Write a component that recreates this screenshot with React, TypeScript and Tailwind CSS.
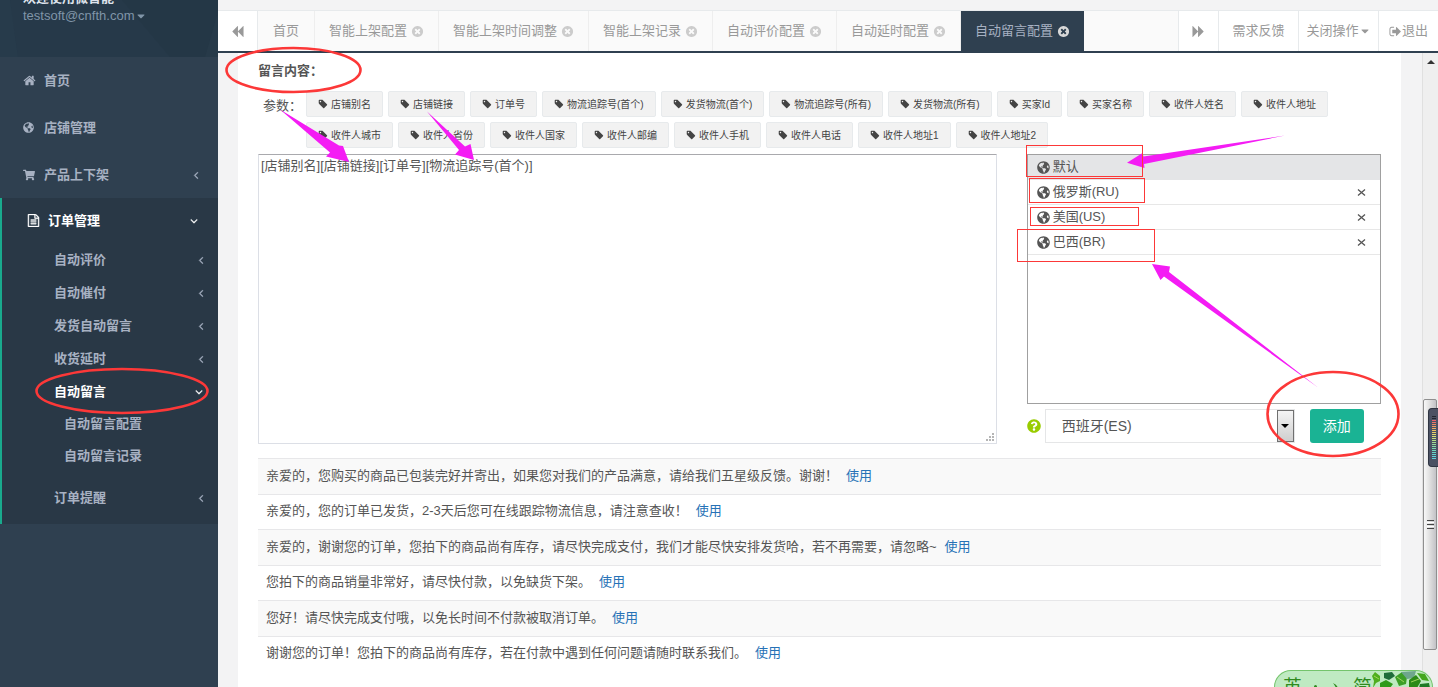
import React from "react";
import { FaGlobeAmericas, FaShoppingCart, FaCaretDown, FaQuestionCircle } from "react-icons/fa";

type GlyphProps = { d: string; className?: string };

function Glyph({ d, className }: GlyphProps) {
  return (
    <svg viewBox="0 0 1792 1792" fill="currentColor" aria-hidden="true" className={`shrink-0 ${className ?? ""}`}>
      <path d={d} />
    </svg>
  );
}

const HOME =
  "M1472 992v480q0 26-19 45t-45 19h-384v-384h-256v384h-384q-26 0-45-19t-19-45v-480q0-1 .5-3t.5-3l575-474 575 474q1 2 1 6zm223-69l-62 74q-8 9-21 11h-3q-13 0-21-7l-692-577-692 577q-12 8-24 7-13-2-21-11l-62-74q-8-10-7-23.5t11-21.5l719-599q32-26 76-26t76 26l244 204v-195q0-14 9-23t23-9h192q14 0 23 9t9 23v408l219 182q10 8 11 21.5t-7 23.5z";
const CLOSE =
  "M1277 1122q0-26-19-45l-181-181 181-181q19-19 19-45 0-27-19-46l-90-90q-19-19-46-19-26 0-45 19l-181 181-181-181q-19-19-45-19-27 0-46 19l-90 90q-19 19-19 46 0 26 19 45l181 181-181 181q-19 19-19 45 0 27 19 46l90 90q19 19 46 19 26 0 45-19l181-181 181 181q19 19 45 19 27 0 46-19l90-90q19-19 19-46zm387-226q0 209-103 385.5t-279.5 279.5-385.5 103-385.5-103-279.5-279.5-103-385.5 103-385.5 279.5-279.5 385.5-103 385.5 103 279.5 279.5 103 385.5z";
const BACKWARD =
  "M1683 141q19-19 32-13t13 32v1472q0 26-13 32t-32-13l-710-710q-9-9-13-19v710q0 26-13 32t-32-13l-710-710q-19-19-19-45t19-45l710-710q19-19 32-13t13 32v710q4-10 13-19z";
const FORWARD =
  "M109 1651q-19 19-32 13t-13-32v-1472q0-26 13-32t32 13l710 710q9 9 13 19v-710q0-26 13-32t32 13l710 710q19 19 19 45t-19 45l-710 710q-19 19-32 13t-13-32v-710q-4 10-13 19z";
const FILE_TEXT =
  "M1596 380q28 28 48 76t20 88v1152q0 40-28 68t-68 28h-1344q-40 0-68-28t-28-68v-1600q0-40 28-68t68-28h896q40 0 88 20t76 48zm-444-244v376h376q-10-29-22-41l-313-313q-12-12-41-22zm384 1528v-1024h-416q-40 0-68-28t-28-68v-416h-768v1536h1280zm-1024-864q0-14 9-23t23-9h704q14 0 23 9t9 23v64q0 14-9 23t-23 9h-704q-14 0-23-9t-9-23v-64zm736 224q14 0 23 9t9 23v64q0 14-9 23t-23 9h-704q-14 0-23-9t-9-23v-64q0-14 9-23t23-9h704zm0 256q14 0 23 9t9 23v64q0 14-9 23t-23 9h-704q-14 0-23-9t-9-23v-64q0-14 9-23t23-9h704z";
const TAG =
  "M576 448q0-53-37.5-90.5t-90.5-37.5-90.5 37.5-37.5 90.5 37.5 90.5 90.5 37.5 90.5-37.5 37.5-90.5zm1067 576q0 53-37 90l-491 492q-39 37-91 37-53 0-90-37l-715-716q-38-37-64.5-101t-26.5-117v-416q0-52 38-90t90-38h416q53 0 117 26.5t102 64.5l715 714q37 39 37 91z";
const SIGN_OUT =
  "M704 1440q0 4 1 20t.5 26.5-3 23.5-10 19.5-20.5 6.5h-320q-119 0-203.5-84.5t-84.5-203.5v-704q0-119 84.5-203.5t203.5-84.5h320q13 0 22.5 9.5t9.5 22.5q0 4 1 20t.5 26.5-3 23.5-10 19.5-20.5 6.5h-320q-66 0-113 47t-47 113v704q0 66 47 113t113 47h312l11.5 1 11.5 3 8 5.5 7 9 2 13.5zm928-544q0 26-19 45l-544 544q-19 19-45 19t-45-19-19-45v-288h-448q-26 0-45-19t-19-45v-384q0-26 19-45t45-19h448v-288q0-26 19-45t45-19 45 19l544 544q19 19 19 45z";
const ANGLE_LEFT =
  "M1203 544q0 13-10 23l-393 393 393 393q10 10 10 23t-10 23l-50 50q-10 10-23 10t-23-10l-466-466q-10-10-10-23t10-23l466-466q10-10 23-10t23 10l50 50q10 10 10 23z";
const ANGLE_DOWN =
  "M1395 736q0 13-10 23l-466 466q-10 10-23 10t-23-10l-466-466q-10-10-10-23t10-23l50-50q10-10 23-10t23 10l393 393 393-393q10-10 23-10t23 10l50 50q10 10 10 23z";

const tabs = ["首页", "智能上架配置", "智能上架时间调整", "智能上架记录", "自动评价配置", "自动延时配置", "自动留言配置"];

const params = [
  "店铺别名", "店铺链接", "订单号", "物流追踪号(首个)", "发货物流(首个)", "物流追踪号(所有)", "发货物流(所有)",
  "买家Id", "买家名称", "收件人姓名", "收件人地址", "收件人城市", "收件人省份", "收件人国家", "收件人邮编",
  "收件人手机", "收件人电话", "收件人地址1", "收件人地址2",
];

const regions = ["默认", "俄罗斯(RU)", "美国(US)", "巴西(BR)"];

const templates = [
  "亲爱的，您购买的商品已包装完好并寄出，如果您对我们的产品满意，请给我们五星级反馈。谢谢！",
  "亲爱的，您的订单已发货，2-3天后您可在线跟踪物流信息，请注意查收！",
  "亲爱的，谢谢您的订单，您拍下的商品尚有库存，请尽快完成支付，我们才能尽快安排发货哈，若不再需要，请忽略~",
  "您拍下的商品销量非常好，请尽快付款，以免缺货下架。",
  "您好！请尽快完成支付哦，以免长时间不付款被取消订单。",
  "谢谢您的订单！您拍下的商品尚有库存，若在付款中遇到任何问题请随时联系我们。",
];

const meterColors = [
  "#20242e", "#20242e", "#f0616c", "#ef7467", "#f08a62", "#f09c60", "#f0ae60", "#efc062", "#ecd066", "#e4da6c",
  "#d8de74", "#c8df7c", "#b6df86", "#a4de90", "#94dd9b", "#86dca6", "#7adbb2", "#70dabd", "#68d8c8", "#62d6d0",
  "#60d4d8", "#60d2dc",
];

function TopItem({ icon, label, arrow }: { icon: React.ReactNode; label: string; arrow?: boolean }) {
  return (
    <a href="#" className="flex h-[47px] items-center pr-4 pl-[23px]">
      <span className="flex w-[21px] items-center">{icon}</span>
      <span className="flex-1">{label}</span>
      {arrow && <Glyph d={ANGLE_LEFT} className="size-3 stroke-current stroke-[60]" />}
    </a>
  );
}

function SubItem({ label, open }: { label: string; open?: boolean }) {
  return (
    <a href="#" className={`flex h-[33px] items-center pl-[52px] ${open ? "pr-[13px] text-white" : "pr-[11px]"}`}>
      <span className="flex-1">{label}</span>
      <Glyph d={open ? ANGLE_DOWN : ANGLE_LEFT} className="size-3 stroke-current stroke-[60]" />
    </a>
  );
}

function Sidebar() {
  return (
    <aside className="flex w-[218px] shrink-0 flex-col bg-[#2f4050] text-[13px] font-bold text-[#a7b1c2]">
      <div className="relative flex h-[57px] flex-col justify-end overflow-hidden bg-[#263949] pb-8 pl-[23px] leading-[18px]">
        <svg className="absolute inset-0 h-full w-full" viewBox="0 0 218 57" preserveAspectRatio="none" aria-hidden="true">
          <path d="M0 0H10L18 57H0Z" fill="#273b4b" />
          <path d="M122 0L170 57H218V0Z" fill="#243746" />
          <path d="M205 57L218 12V57Z" fill="#273a49" />
        </svg>
        <span className="relative text-[#dfe4ed]">欢迎使用微智能</span>
        <a href="#" className="relative flex items-center font-normal text-[#8095a8]">
          testsoft@cnfth.com
          <FaCaretDown className="ml-px size-3" />
        </a>
      </div>
      <nav>
        <TopItem icon={<Glyph d={HOME} className="size-[13px]" />} label="首页" />
        <TopItem icon={<FaGlobeAmericas className="size-[11px]" />} label="店铺管理" />
        <TopItem icon={<FaShoppingCart className="size-3" />} label="产品上下架" arrow />
        <div className="border-l-2 border-[#19aa8d] bg-[#293846] pb-[10px]">
          <a href="#" className="flex h-[45px] items-center pr-[18px] pl-[25px] text-white">
            <Glyph d={FILE_TEXT} className="size-[13px] stroke-current stroke-[50]" />
            <span className="ml-2 flex-1">订单管理</span>
            <Glyph d={ANGLE_DOWN} className="size-3 stroke-current stroke-[60]" />
          </a>
          <SubItem label="自动评价" />
          <SubItem label="自动催付" />
          <SubItem label="发货自动留言" />
          <SubItem label="收货延时" />
          <SubItem label="自动留言" open />
          <div className="mb-[9px]">
            <a href="#" className="flex h-8 items-center pl-[62px]">自动留言配置</a>
            <a href="#" className="flex h-8 items-center pl-[62px]">自动留言记录</a>
          </div>
          <SubItem label="订单提醒" />
        </div>
      </nav>
    </aside>
  );
}

function TabBar() {
  return (
    <header className="bg-[#f3f3f4] pt-[10px]">
      <div className="flex h-[43px] border-t border-b-2 border-t-[#e7eaec] border-b-[#2f4050] bg-[#fafafa] text-[13px] text-[#999]">
        <button aria-label="向左滚动" className="flex w-10 shrink-0 items-center justify-center border-r border-[#e7eaec] bg-white">
          <Glyph d={BACKWARD} className="size-[13px]" />
        </button>
        <nav className="flex min-w-0 flex-1 overflow-hidden">
          {tabs.map((t, i) => {
            const active = i === tabs.length - 1;
            return (
              <a
                key={t}
                href="#"
                className={`flex shrink-0 items-center whitespace-nowrap ${
                  active
                    ? "bg-[#2f4050] px-[14px] text-[#a7b1c2]"
                    : i === 0
                      ? "border-r border-[#eee] px-[15px]"
                      : "border-r border-[#eee] px-[14px]"
                }`}
              >
                {t}
                {i > 0 && <Glyph d={CLOSE} className={`ml-1 size-[13px] ${active ? "text-[#d8d8d8]" : "text-[#ccc]"}`} />}
              </a>
            );
          })}
        </nav>
        <div className="flex shrink-0 bg-white">
          <button aria-label="向右滚动" className="flex w-10 items-center justify-center border-l border-[#e7eaec]">
            <Glyph d={FORWARD} className="size-[13px]" />
          </button>
          <button className="w-20 border-l border-[#e7eaec]">需求反馈</button>
          <button className="flex w-20 items-center justify-center border-l border-[#e7eaec]">
            关闭操作
            <FaCaretDown className="size-3" />
          </button>
          <a href="#" className="flex w-[60px] items-center justify-center border-l border-[#e7eaec]">
            <Glyph d={SIGN_OUT} className="size-[13px]" />
            退出
          </a>
        </div>
      </div>
    </header>
  );
}

function ScrollBar() {
  return (
    <div className="flex w-4 shrink-0 flex-col items-center border-l border-[#e0e0e0] bg-[#efefef]" aria-hidden="true">
      <span className="mt-[7px] border-x-[4px] border-b-[4px] border-x-transparent border-b-[#333]" />
      <div className="mt-[335px] mr-px flex h-[251px] w-[14px] flex-col items-center justify-center gap-px rounded-[2px] border border-[#8f8f8f] bg-linear-to-r from-[#f8f8f8] via-[#dedede] to-[#c2c2c6]">
        <span className="h-px w-[7px] bg-[#444]" />
        <span className="h-px w-[7px] bg-white" />
        <span className="h-px w-[7px] bg-[#444]" />
        <span className="h-px w-[7px] bg-white" />
        <span className="h-px w-[7px] bg-[#444]" />
      </div>
    </div>
  );
}

function Editor() {
  return (
    <section>
      <div className="grid grid-cols-3 gap-x-[30px]">
        <div className="relative col-span-2">
          <textarea
            aria-label="留言内容"
            defaultValue="[店铺别名][店铺链接][订单号][物流追踪号(首个)]"
            className="block h-[290px] w-full resize-none rounded-[1px] border border-[#dcdfe6] border-t-[#a9a9ad] bg-white px-[2px] py-px text-[13px] leading-5 text-[#555] outline-none"
          />
          <svg className="pointer-events-none absolute right-[3px] bottom-[3px] size-2" viewBox="0 0 8 8" fill="#b5b5b5" aria-hidden="true">
            <path d="M6 0h2v2h-2zM3 3h2v2h-2zM6 3h2v2h-2zM0 6h2v2h-2zM3 6h2v2h-2zM6 6h2v2h-2z" />
          </svg>
        </div>
        <div className="flex flex-col gap-[5px]">
          <ul className="h-[250px] border border-[#a0a0a0] text-[13px] text-[#555]">
            {regions.map((r, i) => (
              <li
                key={r}
                className={`flex h-[25px] items-center border-b pr-[14px] pl-[9px] ${
                  i === 0 ? "border-[#e4e5e7] bg-[#e4e5e7]" : "border-[#e7e7e7]"
                }`}
              >
                <FaGlobeAmericas className="mr-[3px] size-[13px] shrink-0" />
                <span className="flex-1">{r}</span>
                {i > 0 && (
                  <button aria-label={`删除${r}`} className="flex size-[9px] items-center justify-center">
                    <svg viewBox="0 0 9 9" className="size-[9px]" fill="none" stroke="currentColor" strokeWidth="1.3">
                      <path d="M1 1.5L8 7.5M8 1.5L1 7.5" />
                    </svg>
                  </button>
                )}
              </li>
            ))}
          </ul>
          <div className="flex items-center">
            <FaQuestionCircle className="size-[14px] shrink-0 text-[#99cc00]" />
            <div className="relative ml-1 flex h-[34px] w-[250px] border border-[#e5e6e7] bg-white">
              <select aria-label="国家" defaultValue="ES" className="w-full appearance-none bg-transparent pl-4 text-sm text-[#555] outline-none">
                <option value="ES">西班牙(ES)</option>
              </select>
              <span className="pointer-events-none absolute top-0 right-0 flex h-8 w-[17px] items-center justify-center border border-[#707070] bg-linear-to-b from-[#f4f4f4] to-[#cfcfcf]">
                <span className="border-x-[4px] border-t-[4px] border-x-transparent border-t-black" />
              </span>
            </div>
            <button className="ml-[15px] h-[34px] w-[54px] rounded-[3px] bg-[#1ab394] text-sm text-white">添加</button>
          </div>
        </div>
      </div>
    </section>
  );
}

function Content() {
  return (
    <main className="min-w-0 flex-1 overflow-hidden bg-[#f3f3f4] pr-[21px] pl-5">
      <div className="min-h-full bg-white px-5 pt-[9px] text-[13px] text-[#555]">
        <h2 className="leading-[18px] font-bold">留言内容：</h2>
        <div className="mt-[11px] flex">
          <span className="w-12 shrink-0 pt-[6px] pl-[5px] leading-[18px] whitespace-nowrap">参数：</span>
          <div className="flex flex-1 flex-wrap gap-[5px]">
            {params.map((p) => (
              <button
                key={p}
                className="flex h-[26px] items-center gap-[3px] rounded-[2px] border border-[#e7eaec] bg-[#f2f2f2] px-[11px] text-[10px] whitespace-nowrap text-[#444]"
              >
                <Glyph d={TAG} className="size-[10px]" />
                {p}
              </button>
            ))}
          </div>
        </div>
        <div className="mt-[6px]">
          <Editor />
        </div>
        <table className="mt-[14px] h-[213px] w-full">
          <tbody>
            {templates.map((t) => (
              <tr key={t} className="border-t border-[#e7e7e9] odd:bg-[#f9f9f9]">
                <td className="px-2 pb-[2px]">
                  {t}
                  <a href="#" className="ml-2 text-[#2672b6]">使用</a>
                </td>
              </tr>
            ))}
          </tbody>
        </table>
      </div>
    </main>
  );
}

function Annotations() {
  return (
    <svg className="pointer-events-none absolute top-0 left-0" width="1438" height="687" viewBox="0 0 1438 687" aria-hidden="true">
      <g fill="#f41cf4">
        <path d="M280 109.500L339 145.500L343 146L349 162L326 156.500L330 152.500Z" />
        <path d="M427 111.500L465 146.500L470.500 144L474 160L455 154.500L459 150Z" />
        <path d="M1285 135.500L1143.500 156.500L1142.500 153L1127 162.700L1144.500 168L1144 164Z" />
        <path d="M1318 387.500L1169 272L1170 266.500L1152 264L1160.500 280L1164 276.500Z" />
      </g>
      <g fill="none" stroke="#fc3838" strokeWidth="2.600">
        <ellipse cx="293.500" cy="70" rx="67" ry="22" />
        <ellipse cx="122" cy="391" rx="85.500" ry="22" />
        <ellipse cx="1333" cy="414" rx="65.500" ry="42" />
      </g>
      <g fill="none" stroke="#fc3838">
        <rect x="1026.500" y="145.500" width="116" height="31" />
        <rect x="1029.500" y="178.500" width="115" height="24" />
        <rect x="1030.500" y="207.500" width="108" height="18" />
        <rect x="1017.500" y="229.500" width="137" height="32" />
      </g>
    </svg>
  );
}

function InputBadge() {
  return (
    <div className="absolute right-[5px] bottom-0 h-[17px] w-[159px] overflow-hidden rounded-t-[17px] border border-b-0 border-[#74c46c] bg-[#bfeac2] text-[#2f8a1e]">
      <div className="flex items-start gap-3 pt-[7px] pl-2 text-[19px] leading-5">
        <span>英</span>
        <span className="mt-[7px] size-[3px] rounded-full bg-[#2f8a1e]" />
        <svg viewBox="0 0 12 14" className="mt-[5px] h-[14px] w-3" fill="currentColor">
          <path d="M4 0Q12 3 8 14Q9 6 4 0Z" />
        </svg>
        <span>简</span>
      </div>
      <svg viewBox="0 0 60 17" className="absolute top-0 right-0 h-[17px] w-[60px]">
        <path d="M0 5L3 1L8 5L8 10L4 12L1 17L2 10Z" fill="#4fae1f" />
        <path d="M12 2L20 1L23 5L17 9L12 7Z" fill="#1f6d3a" />
        <path d="M8 12L14 9L21 13L18 17H8Z" fill="#2f9a1a" />
        <path d="M23 6L30 1L35 6L34 13L27 15Z" fill="#3c9f26" />
        <path d="M29 1L44 0L42 7L35 8Z" fill="#6ea68c" />
        <path d="M37 9L44 4L49 10L45 17H37Z" fill="#2c8a17" />
        <path d="M45 2L53 3L57 10L50 9Z" fill="#43a61d" />
        <path d="M48 13L57 12L58 17H47Z" fill="#1f7a25" />
        <path d="M2 5L7 8M25 6L32 11M39 11L47 8" stroke="#9ed45a" fill="none" />
      </svg>
    </div>
  );
}

function MeterTab() {
  return (
    <div className="absolute top-[408px] right-0 flex h-[59px] w-[10px] flex-col items-center gap-px rounded-l-[4px] border border-r-0 border-[#2f3542] bg-[#4b5163] pt-[7px]" aria-hidden="true">
      {meterColors.map((c, i) => (
        <span key={i} className="h-px w-1" style={{ backgroundColor: c }} />
      ))}
    </div>
  );
}

export default function App() {
  return (
    <div className="relative flex h-screen overflow-hidden bg-[#f3f3f4] font-['Liberation_Sans','Noto_Sans_CJK_SC',sans-serif]">
      <Sidebar />
      <div className="flex min-w-0 flex-1 flex-col">
        <TabBar />
        <div className="flex min-h-0 flex-1">
          <Content />
          <ScrollBar />
        </div>
      </div>
      <MeterTab />
      <InputBadge />
      <Annotations />
    </div>
  );
}
